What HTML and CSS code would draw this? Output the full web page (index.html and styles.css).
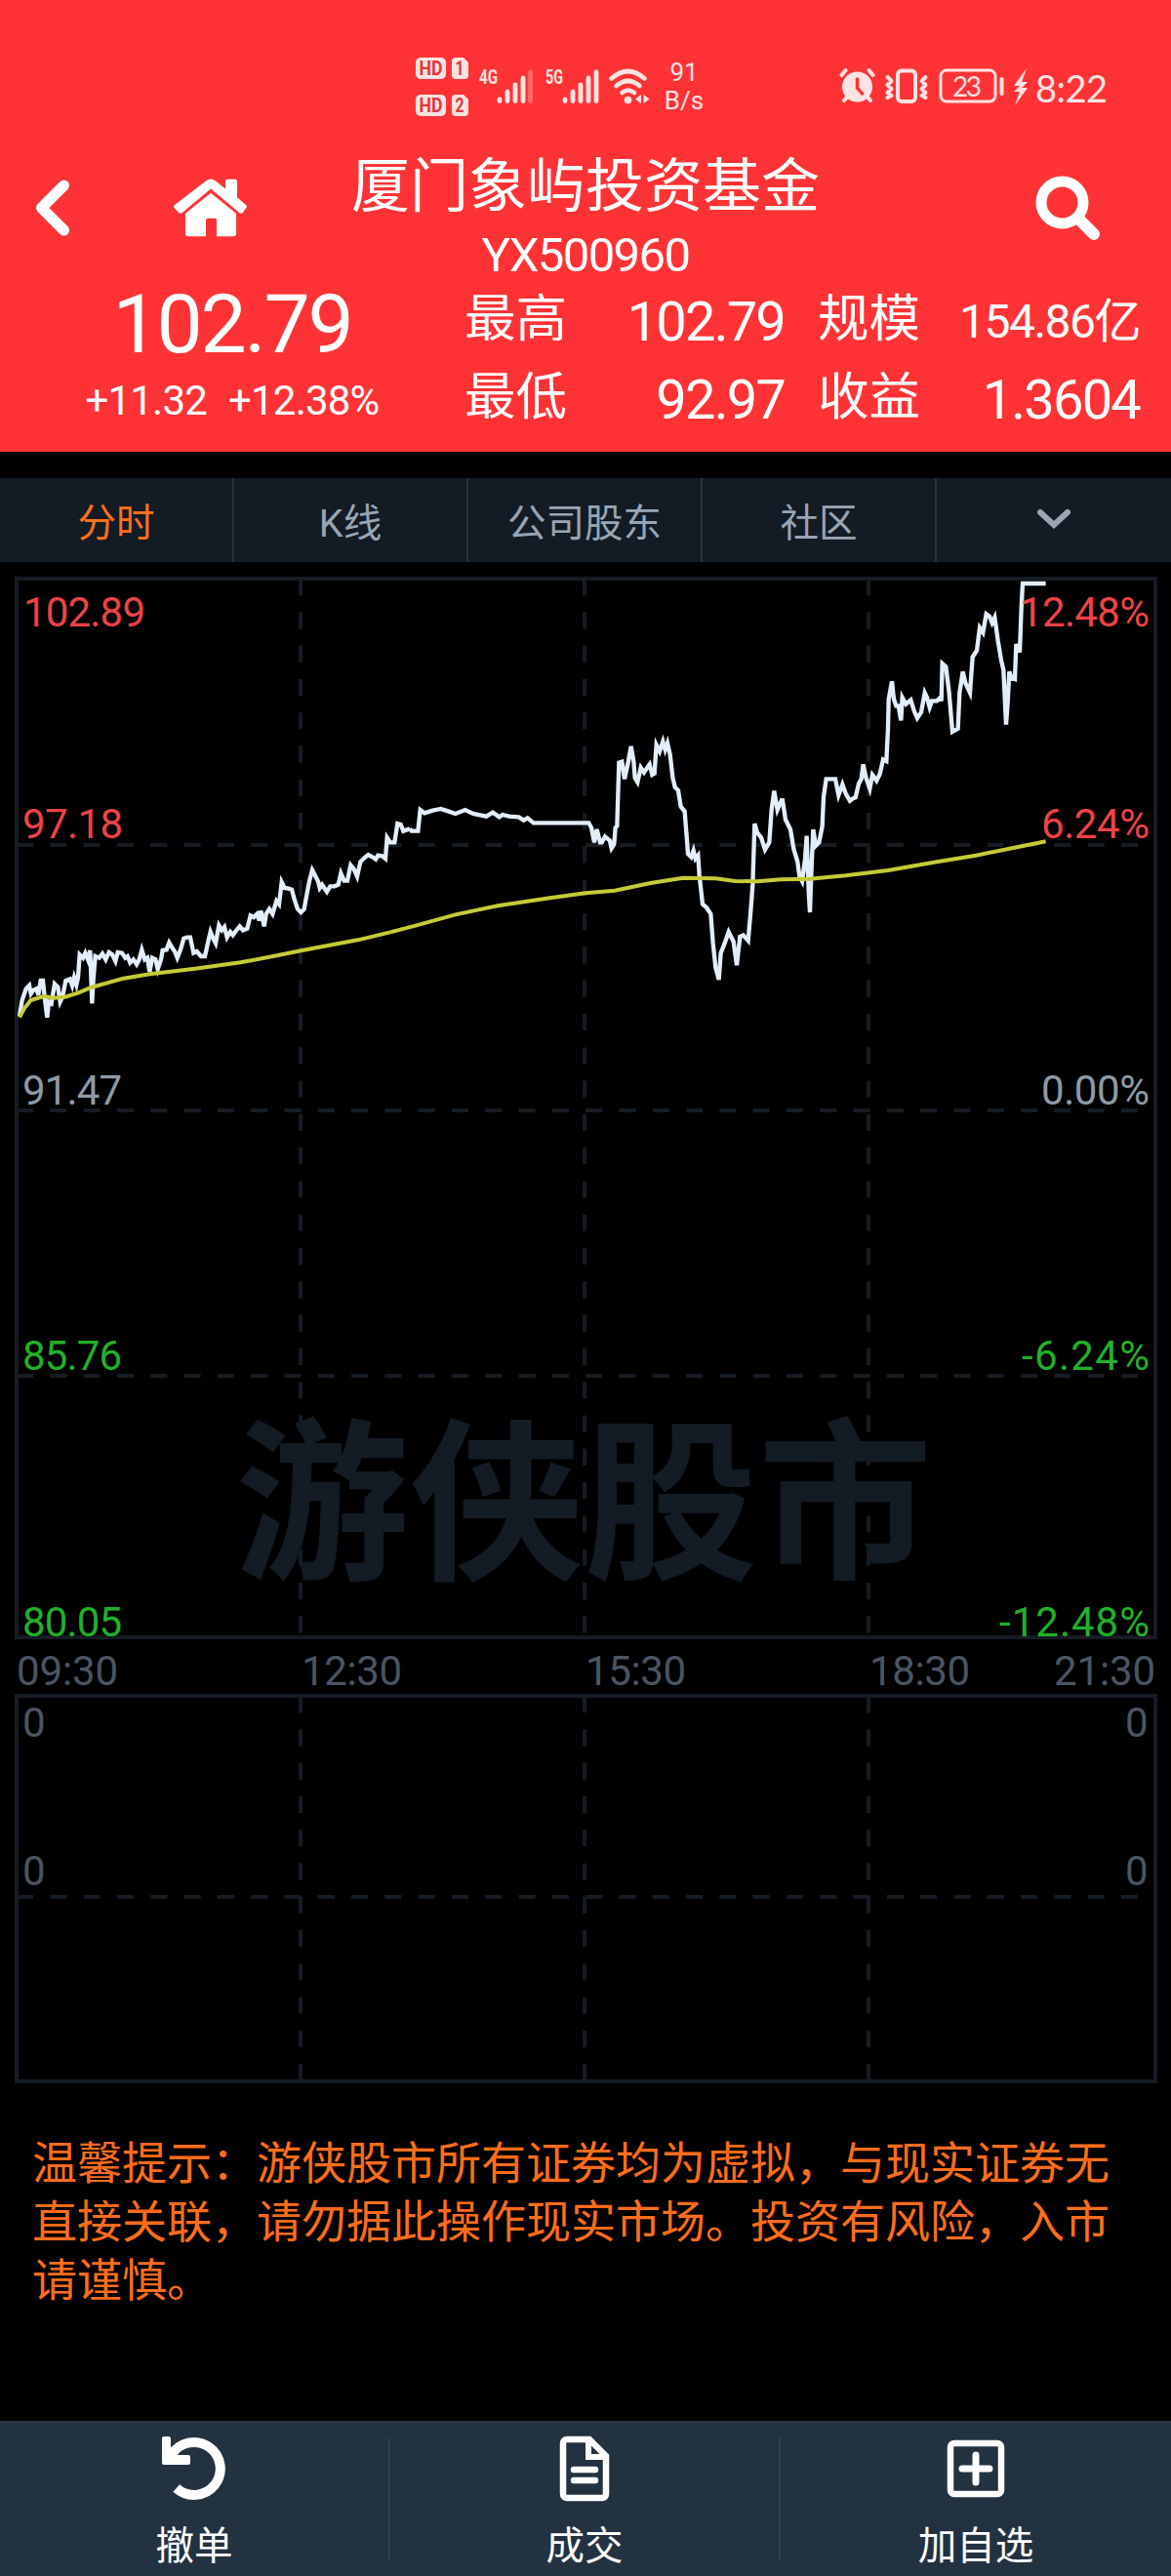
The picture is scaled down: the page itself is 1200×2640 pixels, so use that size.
FILE: index.html
```html
<!DOCTYPE html>
<html lang="zh-CN">
<head>
    <meta charset="UTF-8">
    <meta name="viewport" content="width=device-width, initial-scale=1.0">
    <title>厦门象屿投资基金</title>
    <link rel="stylesheet" href="styles.css">
</head>
<body>
    <header class="header">
        <div class="status-bar">
            <svg class="status-left" width="240" height="64" viewBox="0 0 240 64">
                <!-- HD badges -->
                <g fill="#ffe3e3">
                    <rect x="0" y="1" width="31" height="22" rx="5"/>
                    <path d="M41 1h8l5 5v13a4 4 0 0 1-4 4h-9a4 4 0 0 1-4-4V5a4 4 0 0 1 4-4z"/>
                    <rect x="0" y="39" width="31" height="22" rx="5"/>
                    <path d="M41 39h8l5 5v13a4 4 0 0 1-4 4h-9a4 4 0 0 1-4-4V43a4 4 0 0 1 4-4z"/>
                </g>
                <g class="badge-text">
                    <text x="3.5" y="19" textLength="24" lengthAdjust="spacingAndGlyphs">HD</text>
                    <text x="40.5" y="19" textLength="9" lengthAdjust="spacingAndGlyphs">1</text>
                    <text x="3.5" y="57" textLength="24" lengthAdjust="spacingAndGlyphs">HD</text>
                    <text x="40.5" y="57" textLength="9" lengthAdjust="spacingAndGlyphs">2</text>
                </g>
                <!-- signal -->
                <g class="net-text">
                    <text x="65" y="28" textLength="19" lengthAdjust="spacingAndGlyphs">4G</text>
                    <text x="133" y="28" textLength="18" lengthAdjust="spacingAndGlyphs">5G</text>
                </g>
                <g stroke="#ffe3e3" stroke-width="4.8" stroke-linecap="round">
                    <path d="M86 44v1.500M94 36v9.500M102 29v16.500M110 22v23.500"/>
                    <path d="M117.500 16v29.500" stroke-opacity=".3"/>
                    <path d="M153 44v1.500M161 36v9.500M169 29v16.500M177 22v23.500M185 16v29.500"/>
                </g>
                <!-- wifi -->
                <g fill="none" stroke="#ffe3e3" stroke-width="4.600" stroke-linecap="round">
                    <path d="M200.500 22.500q17-15 34 0M205.500 30q12-10 24 0M211.500 37q6-5 12.500 0"/>
                </g>
                <circle cx="217.500" cy="44.500" r="3.800" fill="#ffe3e3"/>
                <path d="M231 39v9l-6-4.500zM233.500 39v9l6-4.500z" fill="#ffe3e3"/>
            </svg>
            <div class="speed">91<br>B/s</div>
            <svg class="status-right" width="196" height="44" viewBox="0 0 196 44">
                <!-- alarm -->
                <g fill="none" stroke="#ffe3e3" stroke-linecap="round">
                    <path d="M2.500 9l4-5M34.500 9l-4-5" stroke-width="4"/>
                    <path d="M5 35l5-6M32 35l-5-6" stroke-width="4"/>
                </g>
                <circle cx="18.500" cy="21" r="15.500" fill="#ffe3e3"/>
                <path d="M18.500 13v9l5 6" fill="none" stroke="#ff3336" stroke-width="3.500" stroke-linecap="round"/>
                <!-- vibrate -->
                <g fill="none" stroke="#ffe3e3">
                    <rect x="60" y="4.500" width="18" height="31.500" rx="4" stroke-width="4"/>
                    <path d="M49.500 11l4 4-4 4 4 4-4 4 4 3-4 2M88.500 11l-4 4 4 4-4 4 4 4-4 3 4 2" stroke-width="4" stroke-linejoin="round" stroke-linecap="round"/>
                </g>
                <!-- battery -->
                <rect x="104" y="4" width="56" height="32" rx="6" fill="none" stroke="#ffe3e3" stroke-width="3"/>
                <rect x="164.500" y="11" width="4" height="19" rx="2" fill="#ffe3e3"/>
                <text class="battery-text" x="116" y="30.500" textLength="30">23</text>
                <path d="M192 2l-13 18h6l-6 6h6l-5 14 13-18h-6l6-6h-6z" fill="#ffe3e3"/>
            </svg>
            <span class="clock">8:22</span>
        </div>

        <div class="title-bar">
            <svg class="icon-back" width="36" height="66" viewBox="0 0 36 66"><path d="M29.500 10L6.500 33l23 23" fill="none" stroke="#fff" stroke-width="11" stroke-linecap="round" stroke-linejoin="round"/></svg>
            <svg class="icon-home" width="76" height="60" viewBox="0 0 76 69" preserveAspectRatio="none">
                <path d="M38 17l26 24v24a3 3 0 0 1-3 3H44V49a2 2 0 0 0-2-2h-7a2 2 0 0 0-2 2v19H15a3 3 0 0 1-3-3V41z" fill="#fff"/>
                <path d="M33 3q5-5 10 0l10 9V3a2 2 0 0 1 2-2h8a2 2 0 0 1 2 2v19l9 9q2 2 0 4l-3 5q-2 2-4 0L38 12 9 40q-2 2-4 0l-4-5q-2-2 0-4z" fill="#fff"/>
            </svg>
            <div class="title">
                <h1>厦门象屿投资基金</h1>
                <div class="code">YX500960</div>
            </div>
            <svg class="icon-search" width="68" height="68" viewBox="0 0 68 68">
                <circle cx="27.500" cy="27.500" r="21.500" fill="none" stroke="#fff" stroke-width="11"/>
                <path d="M45 45l15 15" stroke="#fff" stroke-width="12" stroke-linecap="round"/>
            </svg>
        </div>

        <div class="quote">
            <div class="quote-main">
                <div class="price">102.79</div>
                <div class="change"><span>+11.32</span><span>+12.38%</span></div>
            </div>
            <div class="quote-grid">
                <span class="label">最高</span><span class="value">102.79</span>
                <span class="label label-2">规模</span><span class="value value-small">154.86亿</span>
                <span class="label">最低</span><span class="value">92.97</span>
                <span class="label label-2">收益</span><span class="value">1.3604</span>
            </div>
        </div>
    </header>

    <nav class="tabs">
        <a class="tab active">分时</a>
        <a class="tab">K线</a>
        <a class="tab">公司股东</a>
        <a class="tab">社区</a>
        <a class="tab"><svg width="38" height="24" viewBox="0 0 38 24"><path d="M5 5l14 13L33 5" fill="none" stroke="#98a6b4" stroke-width="6" stroke-linecap="round"/></svg></a>
    </nav>

    <svg class="chart" width="1200" height="1564" viewBox="0 576 1200 1564">
        <g class="grid">
            <path class="dash" d="M308 593V1678M599 593V1678M890 593V1678M17 866H1184M17 1138H1184M17 1410H1184"/>
            <path class="dash" d="M308 1738V2133M599 1738V2133M890 1738V2133M17 1944H1184"/>
            <rect x="17" y="593" width="1167" height="1085"/>
            <rect x="17" y="1738" width="1167" height="395"/>
        </g>
        <text class="watermark" x="241" y="1605" textLength="714">游侠股市</text>

        <!-- price -->
        <g class="line-price">
            <polyline transform="translate(0 720) scale(.33333)" points="60,965 68,915 80,880 90,870 95,895 102,885 112,880 118,900 125,855 132,855 137,905 145,968 150,920 158,925 168,865 178,875 185,920 192,905 202,855 215,850 222,870 228,845 235,868 240,845 245,775 255,785 262,770 270,790 277,762 280,840 283,925 287,850 293,780 305,785 315,772 325,790 335,768 345,775 355,795 362,768 375,770 385,785 392,780 400,800 410,790 420,805 428,790 436,760 445,790 453,785 460,828 468,785 478,790 485,820 495,790 500,762 512,760 520,738 530,755 537,765 545,785 555,760 565,725 575,722 585,722 595,770 605,765 618,780 630,780 640,735 647,705 655,725 663,740 673,685 682,700 690,690 698,722 708,705 716,715 727,700 737,688 747,700 760,695 770,655 780,660 790,650 797,670 802,640 812,688 818,650 828,635 838,650 850,610 858,620 866,552 875,570 887,572 897,575 905,605 915,635 925,645 935,635 945,580 952,545 960,515 968,530 978,550 983,570 990,560 1005,582 1015,565 1028,565 1040,560 1048,525 1058,548 1068,548 1078,500 1088,512 1098,535 1108,490 1120,478 1132,468 1145,475 1155,482 1162,470 1175,472 1185,480 1190,415 1200,430 1213,430 1222,372 1232,375 1240,395 1260,388"/>
            <polyline transform="translate(400 720) scale(.33333)" points="60,388 65,395 85,395 92,330 105,340 130,332 155,327 180,335 200,342 230,330 255,342 295,350 315,338 335,352 345,345 365,350 395,352 410,362 422,355 440,370 610,370 618,385 627,430 635,390 645,430 650,430 660,412 675,425 680,448 688,435 692,385 697,380 703,185 712,182 720,235 730,190 740,135 748,180 752,232 760,245 770,200 780,215 790,200 797,190 805,222 812,218 818,130 828,150 838,120 845,145 852,125 860,160 868,230 875,260 885,270 893,320 905,335 912,425 915,465 925,475 932,455 938,480 946,470 950,530 960,620 972,630 985,650 992,740 1000,815 1010,852 1016,770 1028,740 1040,705 1055,735 1065,808 1075,720 1085,715 1100,732 1108,640 1114,560 1120,372 1128,400 1140,415 1152,452 1165,430 1172,330 1180,272 1190,330 1205,295"/>
            <polyline transform="translate(800 580) scale(.33333)" points="5,715 15,780 30,810 40,870 52,910 58,955 66,970 75,900 80,830 86,1000 90,1065 94,950 100,810 108,860 118,850 128,800 132,710 140,655 155,655 168,655 178,705 190,672 200,700 213,722 222,715 230,712 240,670 248,655 254,610 262,650 274,685 282,642 295,660 305,640 315,595 325,600 330,500 332,410 342,355 348,410 355,430 362,430 370,475 374,405 385,425 400,412 410,445 420,468 432,450 443,390 450,405 458,435 465,415 480,415 490,405 494,415 497,300 508,310 518,390 528,510 545,500 550,390 560,325 568,360 582,390 590,280 603,260 612,190 622,205 632,148 642,155 650,175 658,158 668,230 678,290 685,320 693,488 698,420 703,325 710,345 720,348 724,240 735,265 740,130 744,54 815,54"/>
        </g>
        <!-- average -->
        <g class="line-avg">
            <polyline transform="translate(0 720) scale(.33333)" points="60,968 75,940 95,915 135,903 165,908 200,905 240,893 280,876 380,848 460,835 600,818 740,799 840,780 925,763 1100,730 1200,706"/>
            <polyline transform="translate(400 720) scale(.33333)" points="0,706 80,685 200,652 330,625 480,602 600,586 690,578 800,555 900,539 1000,541 1060,549 1130,550 1200,544"/>
            <polyline transform="translate(800 580) scale(.33333)" points="0,964 90,962 200,952 330,936 480,910 600,890 700,870 815,847"/>
        </g>

        <g class="axis">
            <text class="up" x="24" y="641.500" textLength="125">102.89</text>
            <text class="up" x="23" y="859" textLength="103">97.18</text>
            <text class="flat" x="23" y="1132" textLength="102">91.47</text>
            <text class="down" x="23" y="1404" textLength="102">85.76</text>
            <text class="down" x="23" y="1677" textLength="102">80.05</text>
            <text class="up" x="1045" y="641.500" textLength="133">12.48%</text>
            <text class="up" x="1067" y="859" textLength="111">6.24%</text>
            <text class="flat" x="1067" y="1132" textLength="111">0.00%</text>
            <text class="down" x="1047" y="1404" textLength="131">-6.24%</text>
            <text class="down" x="1024" y="1677" textLength="154">-12.48%</text>
            <g class="time">
                <text x="17" y="1727" textLength="104">09:30</text>
                <text x="309" y="1727" textLength="103">12:30</text>
                <text x="600" y="1727" textLength="103">15:30</text>
                <text x="891" y="1727" textLength="103">18:30</text>
                <text x="1080" y="1727" textLength="104">21:30</text>
                <text x="23" y="1779.500">0</text>
                <text x="1153" y="1779.500">0</text>
                <text x="23" y="1931.500">0</text>
                <text x="1153" y="1931.500">0</text>
            </g>
        </g>
    </svg>

    <p class="notice">温馨提示：游侠股市所有证券均为虚拟，与现实证券无直接关联，请勿据此操作现实市场。投资有风险，入市请谨慎。</p>

    <footer class="toolbar">
        <a class="tool">
            <svg width="68" height="68" viewBox="0 0 68 68">
                <path d="M11 19.500A27 27 0 1 1 15.700 54" fill="none" stroke="#fff" stroke-width="10"/>
                <path d="M1 3a2 2 0 0 1 2-2h5a2 2 0 0 1 2 2v13l7 4h11a2 2 0 0 1 2 2v6a2 2 0 0 1-2 2H3a2 2 0 0 1-2-2z" fill="#fff"/>
            </svg>
            <span>撤单</span>
        </a>
        <a class="tool">
            <svg width="52" height="68" viewBox="0 0 52 68">
                <path d="M8 4h23l17 17v39a4 4 0 0 1-4 4H8a4 4 0 0 1-4-4V8a4 4 0 0 1 4-4z" fill="none" stroke="#fff" stroke-width="6.500"/>
                <path d="M30 4v18h18" fill="none" stroke="#fff" stroke-width="6"/>
                <path d="M15 35h22M15 46h22" stroke="#fff" stroke-width="6.500" stroke-linecap="round"/>
            </svg>
            <span>成交</span>
        </a>
        <a class="tool">
            <svg width="60" height="68" viewBox="0 0 60 68">
                <rect x="4" y="8" width="52" height="52" rx="4" fill="none" stroke="#fff" stroke-width="6.500"/>
                <path d="M30 20v28M16 34h28" stroke="#fff" stroke-width="7" stroke-linecap="round"/>
            </svg>
            <span>加自选</span>
        </a>
    </footer>
</body>
</html>
```
FILE: styles.css
```css
* {
    box-sizing: border-box;
}

body {
    margin: 0;
    width: 1200px;
    height: 2640px;
    display: flex;
    flex-direction: column;
    background-color: #000;
    font-family: Roboto, "Noto Sans CJK SC", sans-serif;
    overflow: hidden;
}

svg {
    display: block;
    flex-shrink: 0;
}

.header {
    height: 463px;
    background-color: #ff3336;
    color: #fff;
}

/* status bar */
.status-bar {
    display: flex;
    height: 148px;
    padding: 58px 0 0 426px;
    color: #ffe3e3;
}

.badge-text {
    font-size: 21px;
    font-weight: 700;
    fill: #e5343a;
}

.net-text {
    font-size: 21px;
    font-weight: 700;
    fill: #ffe3e3;
}

.speed {
    width: 70px;
    padding-top: 2px;
    font-size: 26px;
    line-height: 29px;
    text-align: center;
}

.status-right {
    margin: 10px 0 0 124px;
}

.battery-text {
    font-family: Lato, sans-serif;
    font-size: 28px;
    fill: #ffe3e3;
}

.clock {
    margin: 9px 0 0 5px;
    font-family: Lato, sans-serif;
    font-size: 38px;
    line-height: 46px;
    letter-spacing: -0.5px;
}

/* title */
.title-bar {
    display: flex;
    height: 140px;
    padding-left: 36px;
}

.icon-back {
    margin-top: 32px;
}

.icon-home {
    margin: 35px 0 0 106px;
}

.title {
    width: 480px;
    margin-left: 106px;
    text-align: center;
}

.title h1 {
    margin: 5px 0 0;
    font-size: 60px;
    font-weight: 400;
    line-height: 78px;
    white-space: nowrap;
}

.code {
    font-size: 49px;
    line-height: 62px;
    letter-spacing: -1.6px;
}

.icon-search {
    margin: 32px 0 0 221px;
}

/* quote */
.quote {
    display: flex;
}

.quote-main {
    width: 476px;
    text-align: center;
}

.price {
    height: 90px;
    font-size: 84px;
    line-height: 89px;
    letter-spacing: -2.2px;
}

.change {
    display: flex;
    justify-content: center;
    gap: 22px;
    font-size: 42px;
    line-height: 66px;
    letter-spacing: -0.8px;
}

.quote-grid {
    display: grid;
    grid-template-columns: 130px 198px 164px 200px;
    grid-template-rows: 80px 80px;
}

.label {
    font-size: 52.5px;
    line-height: 78px;
}

.label-2 {
    padding-left: 34px;
}

.value {
    font-size: 56px;
    line-height: 84px;
    letter-spacing: -1.8px;
    text-align: right;
}

.value-small {
    font-size: 48px;
    letter-spacing: -1.5px;
}

/* tabs */
.tabs {
    display: grid;
    grid-template-columns: repeat(5, 1fr);
    height: 86px;
    margin-top: 27px;
    background-color: #131b25;
    flex-shrink: 0;
}

.tab {
    display: flex;
    align-items: center;
    justify-content: center;
    padding-bottom: 2px;
    font-size: 39.5px;
    color: #98a6b4;
    border-right: 2px solid #283340;
}

.tab:last-child {
    border-right: none;
}

.tab.active {
    color: #ff701a;
}

/* chart */
.grid path, .grid rect {
    fill: none;
    stroke: #161c24;
    stroke-width: 4;
}

.grid .dash {
    stroke-dasharray: 17.15 17.15;
}

.watermark {
    font-family: "Noto Sans CJK SC", sans-serif;
    font-size: 178px;
    font-weight: 700;
    fill: #131b25;
}

.line-price {
    fill: none;
    stroke: #e3eefb;
    stroke-width: 13;
}

.line-avg {
    fill: none;
    stroke: #c6cb36;
    stroke-width: 12;
}

.axis {
    font-size: 42px;
}

.up {
    fill: #ee4247;
}

.down {
    fill: #21b02a;
}

.flat {
    fill: #8f9aa6;
}

.time {
    fill: #4b5563;
}

/* notice */
.notice {
    margin: 43px 48px 0 33px;
    font-family: "Noto Sans CJK SC", sans-serif;
    font-size: 46px;
    line-height: 60px;
    color: #ff6d1b;
}

/* toolbar */
.toolbar {
    display: grid;
    grid-template-columns: repeat(3, 1fr);
    height: 159px;
    margin-top: auto;
    padding: 16px 0;
    background-color: #233241;
    border-top: 2px solid #2a3644;
    color: #fff;
    flex-shrink: 0;
}

.tool {
    display: flex;
    flex-direction: column;
    align-items: center;
    height: 125px;
    font-size: 39.5px;
    line-height: 56px;
    border-right: 2px solid #314151;
}

.tool:last-child {
    border-right: none;
}

.tool svg {
    margin-top: -3px;
}

.tool span {
    margin-top: 18px;
}
```
